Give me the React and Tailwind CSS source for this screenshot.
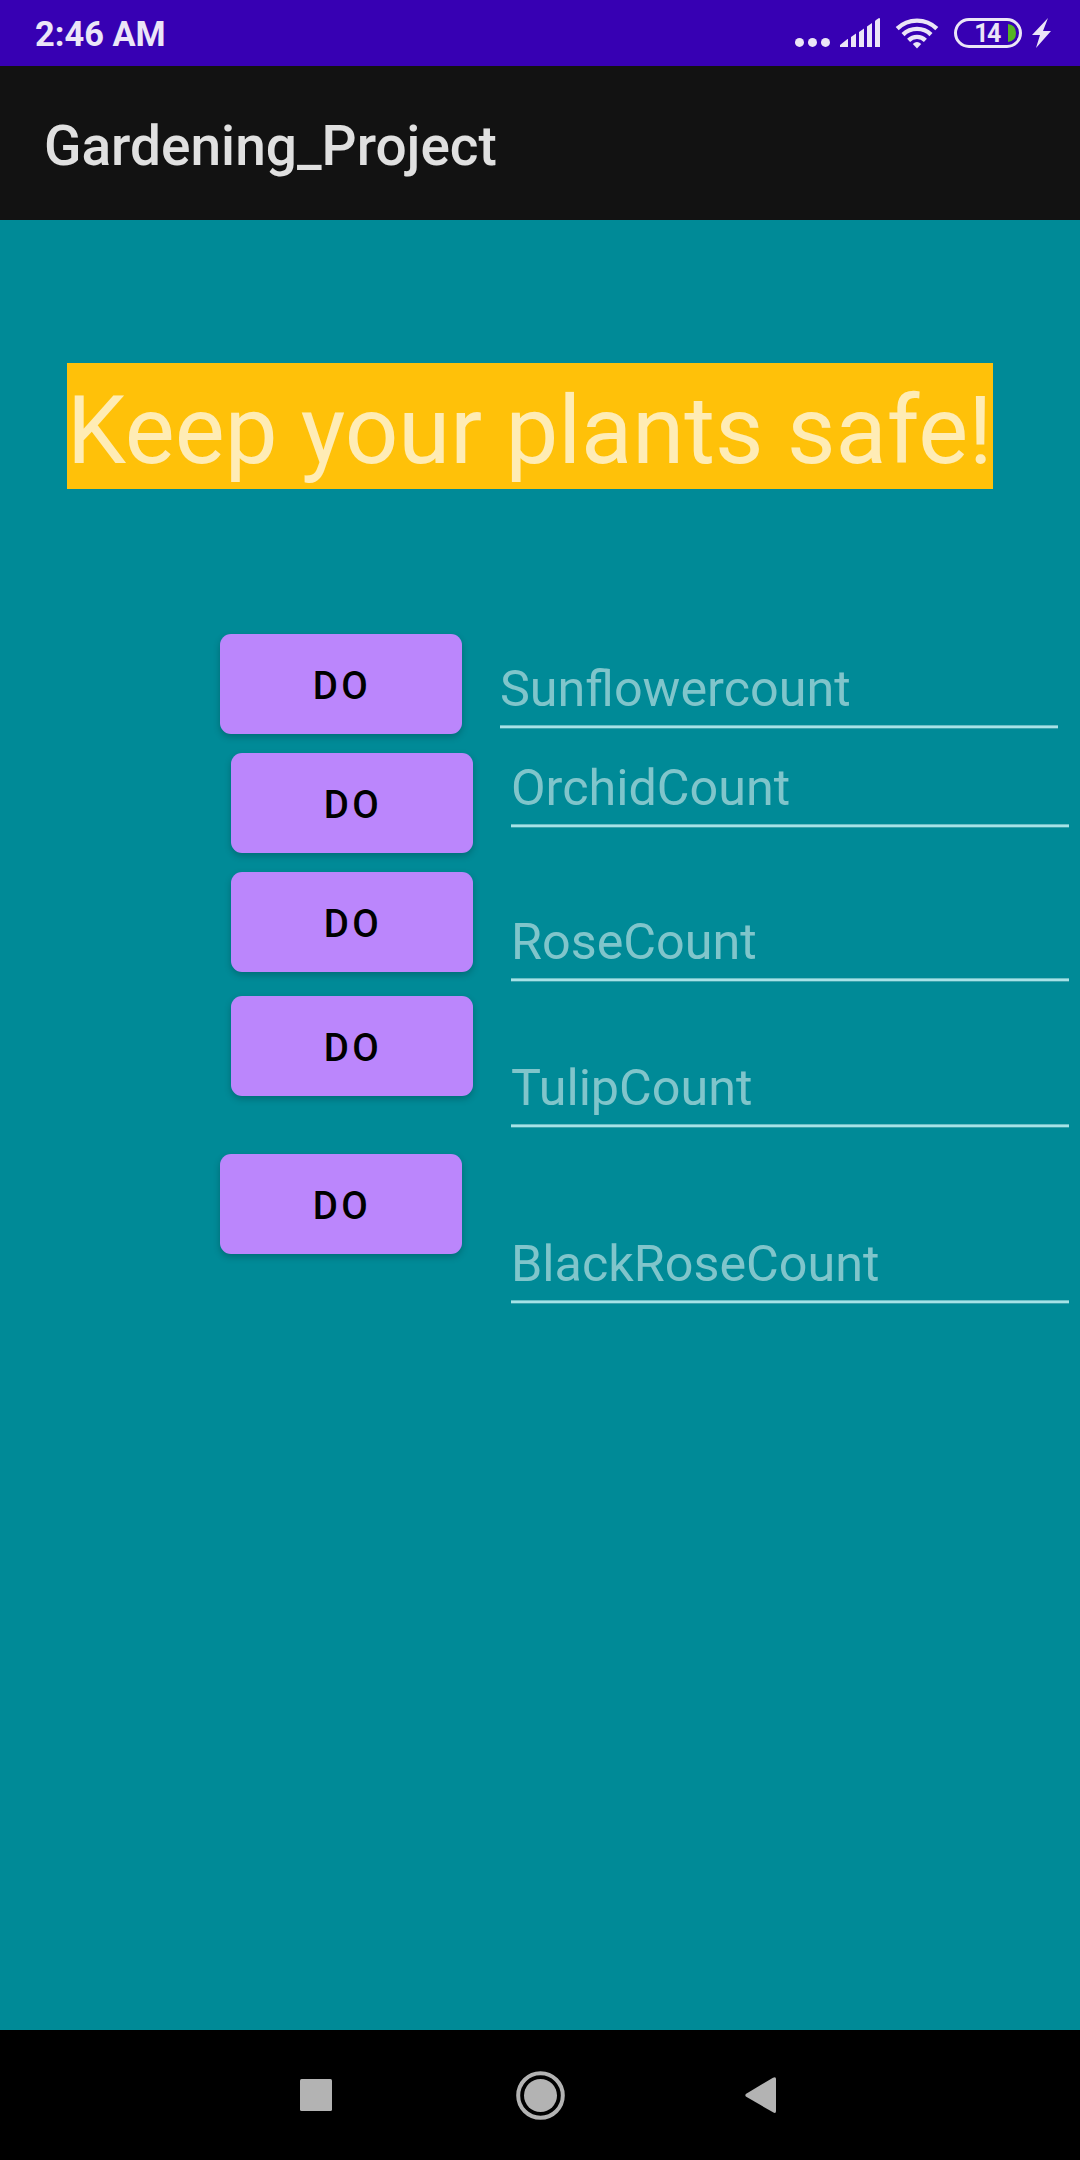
const buttons = [
  { id: "sunflower", place: "mt-0 ml-0" },
  { id: "orchid", place: "mt-[19px] ml-[11px]" },
  { id: "rose", place: "mt-[19px] ml-[11px]" },
  { id: "tulip", place: "mt-6 ml-[11px]" },
  { id: "black-rose", place: "mt-[58px] ml-0" },
];

const fields = [
  { label: "Sunflowercount", place: "mt-0 ml-0" },
  { label: "OrchidCount", place: "mt-[19px] ml-[11px]" },
  { label: "RoseCount", place: "mt-[74px] ml-[11px]" },
  { label: "TulipCount", place: "mt-[66px] ml-[11px]" },
  { label: "BlackRoseCount", place: "mt-24 ml-[11px]" },
];

function StatusBar() {
  return (
    <header className="flex h-[66px] items-center justify-between bg-[#3700b3] pl-[35px] pr-7 text-[#ebe5f7]">
      <span className="pt-px text-[34.4px] leading-[68px] font-bold">2:46 AM</span>
      <div className="flex h-[66px] items-center">
        <svg className="h-[66px] w-[154px]" viewBox="790 0 154 66" fill="currentColor">
          <circle cx="799.5" cy="42.4" r="4.5" />
          <circle cx="812.5" cy="42.4" r="4.5" />
          <circle cx="825.5" cy="42.4" r="4.5" />
          <path d="M840 47v-2l7.5-6h.5v8z" />
          <path d="M851 47V37l5-3.500V47z" />
          <path d="M859 47V32l5-3.500V47z" />
          <path d="M867 47V26.500l5-3.500V47z" />
          <path d="M875 47V21.500q0-1 1-1.500l3-2q1 0 1 1V47z" />
          <g fill="none" stroke="currentColor" strokeWidth="4.300">
            <path d="M897.2 28.600a28.500 28.500 0 0 1 39.600 0" />
            <path d="M903 34.600a20 20 0 0 1 28 0" />
            <path d="M908.6 40.400a12 12 0 0 1 16.800 0" />
          </g>
          <path d="M917 48.500l-4.200-4.600q4.200-3.600 8.400 0z" />
        </svg>
        <div className="relative ml-[10px] flex h-[30px] w-[68px] items-center justify-center rounded-full border-[3px] border-current">
          <span className="pt-0.5 pr-0.5 text-[25px] leading-[30px] font-bold tracking-[-1.5px]">14</span>
          <svg className="absolute top-[3px] right-[3px] h-[18px] w-2" viewBox="0 0 8 18">
            <path d="M0 0q8 1 8 9t-8 9z" fill="#56b523" />
          </svg>
        </div>
        <svg className="ml-[10px] h-[30px] w-5" viewBox="0 0 20 30" fill="currentColor">
          <path d="M16 0L0 17h8L4 30l15-17h-8z" />
        </svg>
      </div>
    </header>
  );
}

export default function App() {
  return (
    <div className="flex h-[2160px] w-[1080px] flex-col overflow-hidden bg-[#008a97] font-['Roboto',sans-serif]">
      <StatusBar />
      <div className="flex h-[154px] items-center bg-[#121212] pl-11">
        <h1 className="pt-[6px] text-[55px] leading-[64px] font-medium text-[#e0e0e0]">Gardening_Project</h1>
      </div>
      <main className="flex flex-1 flex-col">
        <div className="mt-[143px] ml-[67px] h-[126px] w-[926px] bg-[#ffc109] text-[94.1px] leading-[136px] whitespace-nowrap text-[#ffecb5]">
          Keep your plants safe!
        </div>
        <div className="mt-[145px] flex pl-[220px]">
          <div className="w-[280px]">
            {buttons.map((b) => (
              <button
                key={b.id}
                className={`${b.place} block h-[100px] w-[242px] rounded-[11px] bg-[#bb86fc] pt-[3px] pl-[2px] text-center text-[38.5px] font-medium tracking-[3.44px] text-black shadow-[0_3px_7px_rgba(0,0,0,0.22)]`}
              >
                DO
              </button>
            ))}
          </div>
          <div className="mt-[14px]">
            {fields.map((f) => (
              <div
                key={f.label}
                className={`${f.place} flex h-20 w-[558px] flex-col text-[50.3px] whitespace-nowrap text-[#80c5cb]`}
              >
                <span className="h-[77px] shrink-0 leading-[82px]">{f.label}</span>
                <span className="h-1 shrink-0 border-t border-b border-t-[#6cbfc6] border-b-[#3aa3ad] bg-[#a6e2e7]" />
              </div>
            ))}
          </div>
        </div>
      </main>
      <nav className="flex h-[130px] items-center bg-black">
        <svg className="ml-[300px] h-8 w-8" viewBox="0 0 32 32" fill="#b3b3b3">
          <rect width="32" height="32" rx="1.500" />
        </svg>
        <svg className="ml-[184px] h-[50px] w-[50px]" viewBox="0 0 50 50">
          <circle cx="24.500" cy="25.500" r="22.300" fill="none" stroke="#b3b3b3" strokeWidth="4" />
          <circle cx="24.500" cy="25.500" r="16.500" fill="#b3b3b3" />
        </svg>
        <svg className="ml-[178px] h-9 w-8" viewBox="0 0 32 36" fill="#b3b3b3">
          <path d="M1.800 17L29 0.700q3-1.500 3 1.300v32q0 3-3 1.300L1.800 19.500q-1-1.200 0-2.500z" />
        </svg>
      </nav>
    </div>
  );
}
